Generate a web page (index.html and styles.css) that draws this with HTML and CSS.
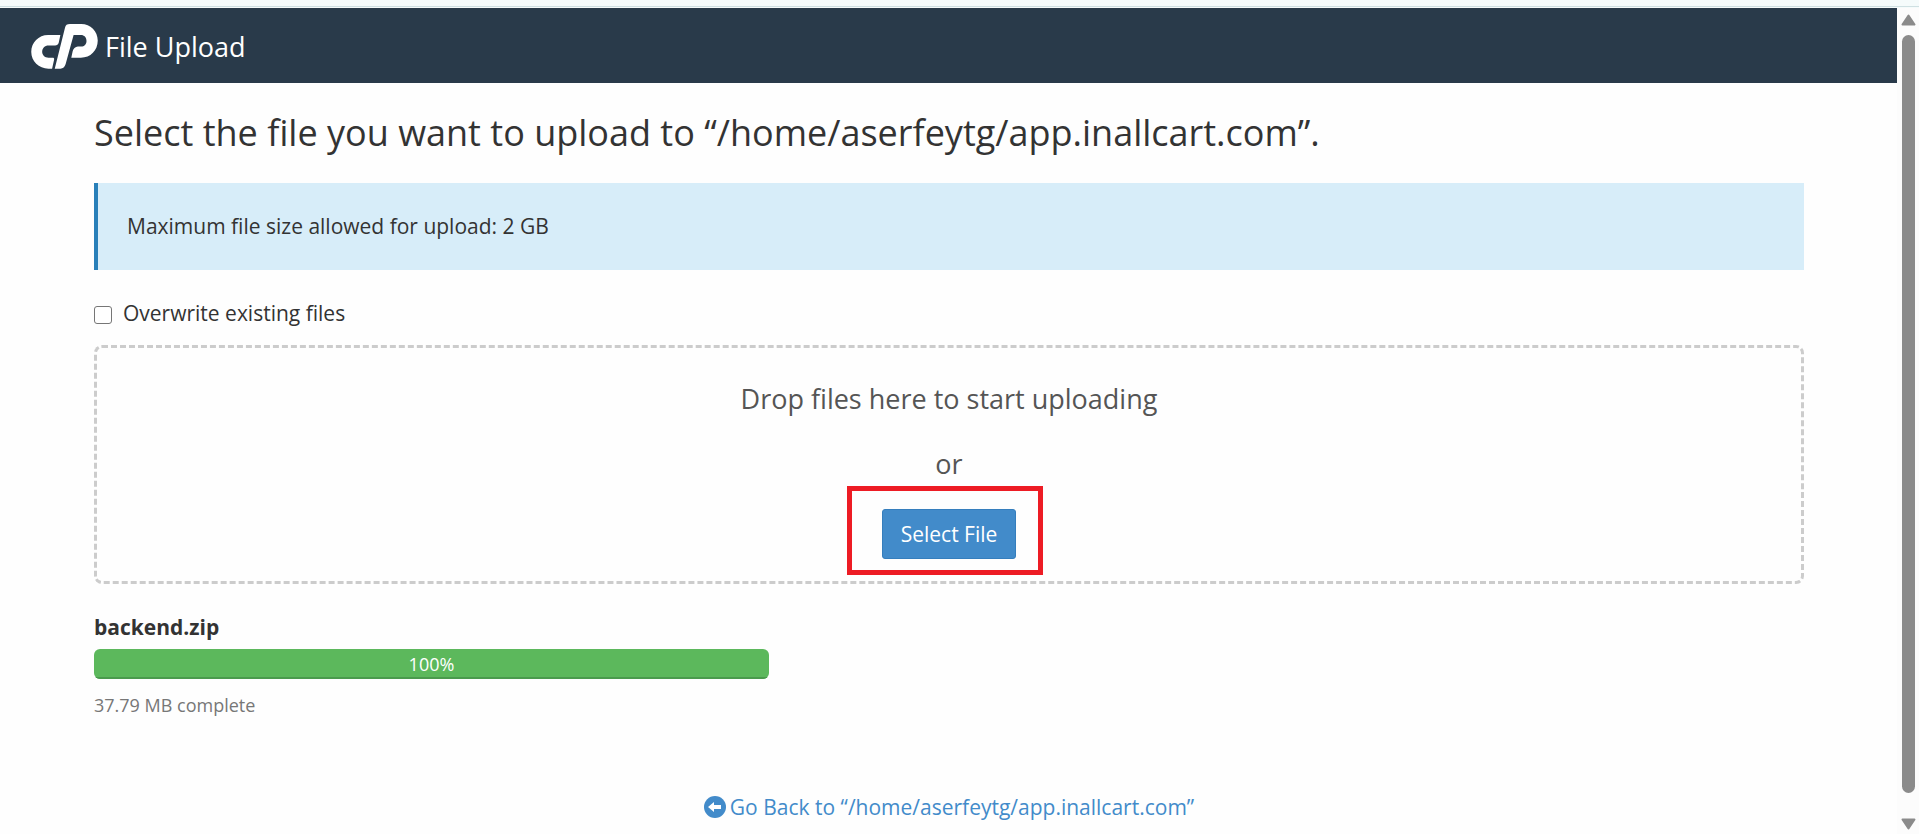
FILE: index.html
```html
<!DOCTYPE html>
<html lang="en">
<head>
  <meta charset="UTF-8" />
  <title>File Upload</title>
  <meta name="viewport" content="width=device-width, initial-scale=1" />
  <link rel="stylesheet" href="styles.css">
</head>
<body>
  <div class="top-strip"></div>
  <div class="viewport">
    <div class="page">
      <header class="navbar">
        <svg class="logo" viewBox="0 0 201 136" aria-hidden="true">
          <path d="M88 33H51C22 33 0 56 0 84c0 29 23 51 52 51h11l6-27c1-4-1-6-4-6H52c-11 0-19-8-19-18 0-11 8-19 19-19h20c6 0 9-2 11-8z" />
          <path d="M117 0h34c28 0 50 22 50 50 0 30-22 52-51 52h-29l4-19c2-9 8-14 16-15h10c9 0 16-7 16-17 0-11-7-18-17-18h-22l-24 88c-3 10-8 14-16 14H71L102 11c2-8 6-11 15-11z" />
        </svg>
        <span class="navbar-title">File Upload</span>
      </header>

      <main class="content">
        <h1>Select the file you want to upload to “/home/aserfeytg/app.inallcart.com”.</h1>

        <div class="callout">Maximum file size allowed for upload: 2 GB</div>

        <div class="overwrite">
          <input type="checkbox" id="overwrite" />
          <label for="overwrite">Overwrite existing files</label>
        </div>

        <div class="dropzone">
          <p>Drop files here to start uploading</p>
          <p>or</p>
          <div class="select-wrap">
            <button type="button" class="select-btn">Select File</button>
            <span class="highlight"></span>
          </div>
        </div>

        <section class="upload">
          <h2>backend.zip</h2>
          <div class="progress" role="progressbar" aria-label="backend.zip" aria-valuenow="100" aria-valuemin="0" aria-valuemax="100">
            <div class="progress-bar" style="width: 100%">100%</div>
          </div>
          <p class="upload-status">37.79 MB complete</p>
        </section>

        <a class="back-link" href="#">
          <svg class="back-icon" viewBox="0 0 22 22" aria-hidden="true">
            <circle cx="11" cy="11" r="11" fill="#428bca" />
            <path d="M4 11l6-5v3h7v4h-7v3z" fill="#fff" />
          </svg>
          <span>Go Back to “/home/aserfeytg/app.inallcart.com”</span>
        </a>
      </main>
    </div>

    <div class="scrollbar" aria-hidden="true">
      <svg class="arrow" viewBox="0 0 15 12"><path d="M7.500 1.500L13.500 10.500H1.500z" /></svg>
      <div class="thumb"></div>
      <svg class="arrow" viewBox="0 0 15 12"><path d="M7.500 10.500L13.500 1.500H1.500z" /></svg>
    </div>
  </div>
</body>
</html>
```
FILE: styles.css
```css
* {
  box-sizing: border-box;
}
body {
  margin: 0;
  height: 100vh;
  display: flex;
  flex-direction: column;
  overflow: hidden;
  font-family: 'Open Sans', 'Noto Sans', sans-serif;
  font-size: 21px;
  line-height: 30px;
  color: #333;
  background: #fefefe;
}
.top-strip {
  height: 8px;
  flex: none;
  background: linear-gradient(#f5fbfb 6px, #cfe0e2 6px, #cfe0e2 7px, #f5fbfb 7px);
}
.viewport {
  flex: 1;
  display: flex;
  min-height: 0;
}
.page {
  flex: 1;
  overflow: hidden;
}

/* header */
.navbar {
  display: flex;
  align-items: center;
  gap: 7px;
  height: 75px;
  padding: 2px 0 0 31px;
  background: #293a4a;
  color: #fff;
}
.logo {
  width: 67px;
  height: 45px;
  fill: #fff;
}
.navbar-title {
  font-size: 27px;
}

.content {
  padding: 25px 93px 0 94px;
}
h1 {
  margin: 0 0 25px;
  font-size: 36px;
  font-weight: 400;
  line-height: 50px;
}
.callout {
  padding: 28px 29px 29px;
  border-left: 4px solid #2980b9;
  background: #d7edf9;
}
.overwrite {
  display: flex;
  align-items: center;
  gap: 11px;
  margin: 28px 0 17px;
}
.overwrite input {
  appearance: none;
  width: 18px;
  height: 18px;
  margin: 4px 0 0;
  border: 1px solid #767676;
  border-radius: 3px;
  background: #fff;
}
.overwrite input:checked {
  background: #428bca;
}

/* drop area */
.dropzone {
  padding: 32px 0 22px;
  border: 3px dashed #ccc;
  border-radius: 8px;
  text-align: center;
}
.dropzone p {
  margin: 0 0 27px;
  font-size: 27px;
  line-height: 38px;
  color: #555;
}
.dropzone p + p {
  margin-bottom: 26px;
}
.select-wrap {
  position: relative;
  display: inline-block;
  vertical-align: top;
}
.select-btn {
  display: block;
  padding: 9px 18px;
  border: 1px solid #357ebd;
  border-radius: 3px;
  background: #428bca;
  color: #fff;
  font: inherit;
  cursor: pointer;
}
.highlight {
  position: absolute;
  inset: -23px -27px -16px -35px;
  border: 5px solid #ed1c24;
  pointer-events: none;
}

/* upload progress */
.upload {
  width: 675px;
  max-width: 100%;
  margin-top: 28px;
}
.upload h2 {
  margin: 0 0 7px;
  font-size: 21px;
  font-weight: 700;
  line-height: 30px;
}
.progress {
  height: 30px;
  border-radius: 6px;
  overflow: hidden;
  background: #f5f5f5;
}
.progress-bar {
  height: 100%;
  background: #5cb85c;
  box-shadow: inset 0 -2px 0 #4a9a4d;
  color: #fff;
  font-size: 18px;
  text-align: center;
}
.upload-status {
  margin: 11px 0 0;
  font-size: 18px;
  color: #777;
}

.back-link {
  display: flex;
  align-items: center;
  justify-content: center;
  gap: 4px;
  margin-top: 72px;
  color: #428bca;
  text-decoration: none;
}
.back-icon {
  width: 22px;
  height: 22px;
}

/* scrollbar */
.scrollbar {
  width: 22px;
  display: flex;
  flex-direction: column;
  align-items: center;
  padding: 6px 0 4px;
  background: #fcfcfc;
}
.arrow {
  width: 15px;
  height: 12px;
  fill: #8b8b8b;
  stroke: #8b8b8b;
  stroke-width: 2;
  stroke-linejoin: round;
}
.thumb {
  flex: 1;
  width: 13px;
  margin: 9px 0 25px;
  border-radius: 7px;
  background: #8b8b8b;
}
```
